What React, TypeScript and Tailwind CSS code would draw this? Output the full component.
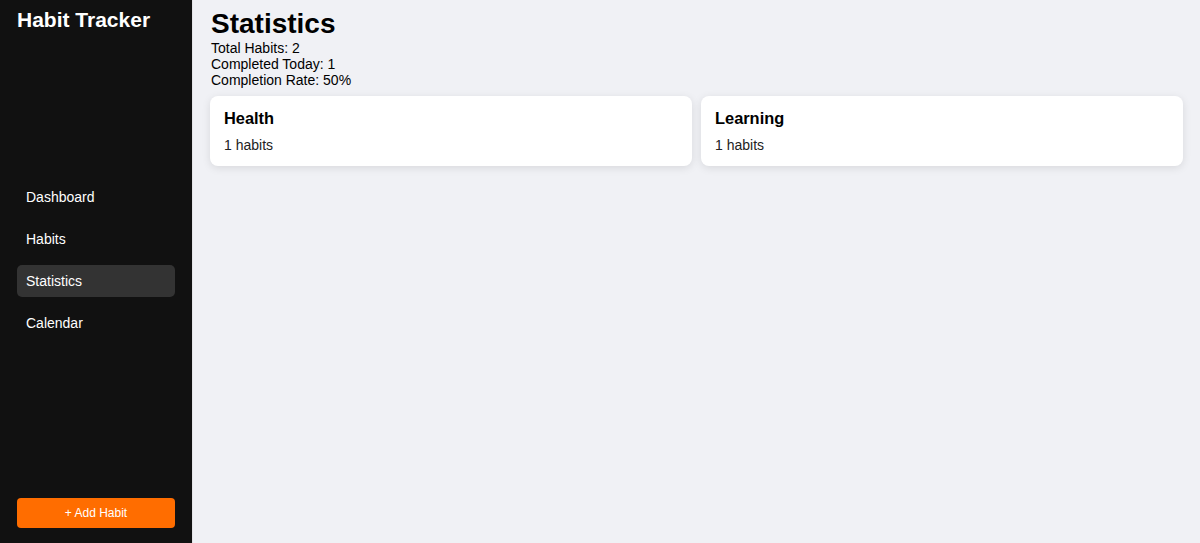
import React from "react";

const navItems = ["Dashboard", "Habits", "Statistics", "Calendar"];

const categories = [
    { name: "Health", count: 1 },
    { name: "Learning", count: 1 },
];

function Sidebar({ active }: { active: string }) {
    return (
        <aside className="w-[193px] shrink-0 bg-[#111111] border-r border-[#e4e4e7] flex flex-col px-[17px] pt-2 pb-[15px] text-white">
            <h2 className="text-[21px] font-bold leading-[24px]">Habit Tracker</h2>
            <nav className="mt-[149px] flex flex-col gap-[10px]">
                {navItems.map((item) => (
                    <div
                        key={item}
                        className={`h-[32px] flex items-center pl-[9px] rounded-[5px] text-[14px] ${
                            item === active ? "bg-[#333333]" : ""
                        }`}
                    >
                        {item}
                    </div>
                ))}
            </nav>
            <button className="mt-auto h-[30px] w-full rounded-[4px] bg-[#ff6d00] text-white text-[12px]">
                + Add Habit
            </button>
        </aside>
    );
}

export default function App() {
    return (
        <div
            className="flex h-[543px] w-full bg-[#f0f1f5] text-black"
            style={{ fontFamily: '"Liberation Sans", Arial, sans-serif' }}
        >
            <Sidebar active="Statistics" />
            <main className="flex-1 px-[17px] pt-2">
                <h1 className="text-[28px] font-bold leading-[32px] pl-px">Statistics</h1>
                <div className="text-[14px] leading-[16px] pl-px">
                    <p>Total Habits: 2</p>
                    <p>Completed Today: 1</p>
                    <p>Completion Rate: 50%</p>
                </div>
                <div className="mt-2 grid grid-cols-2 gap-[9px]">
                    {categories.map((c) => (
                        <div
                            key={c.name}
                            className="h-[70px] bg-white rounded-[8px] shadow-[0_2px_8px_rgba(0,0,0,0.1)] px-[14px] pt-[13px]"
                        >
                            <h3 className="text-[16.4px] font-bold leading-[19px]">{c.name}</h3>
                            <p className="mt-[9px] text-[14px] leading-[16px] text-[#222]">
                                {c.count} habits
                            </p>
                        </div>
                    ))}
                </div>
            </main>
        </div>
    );
}
